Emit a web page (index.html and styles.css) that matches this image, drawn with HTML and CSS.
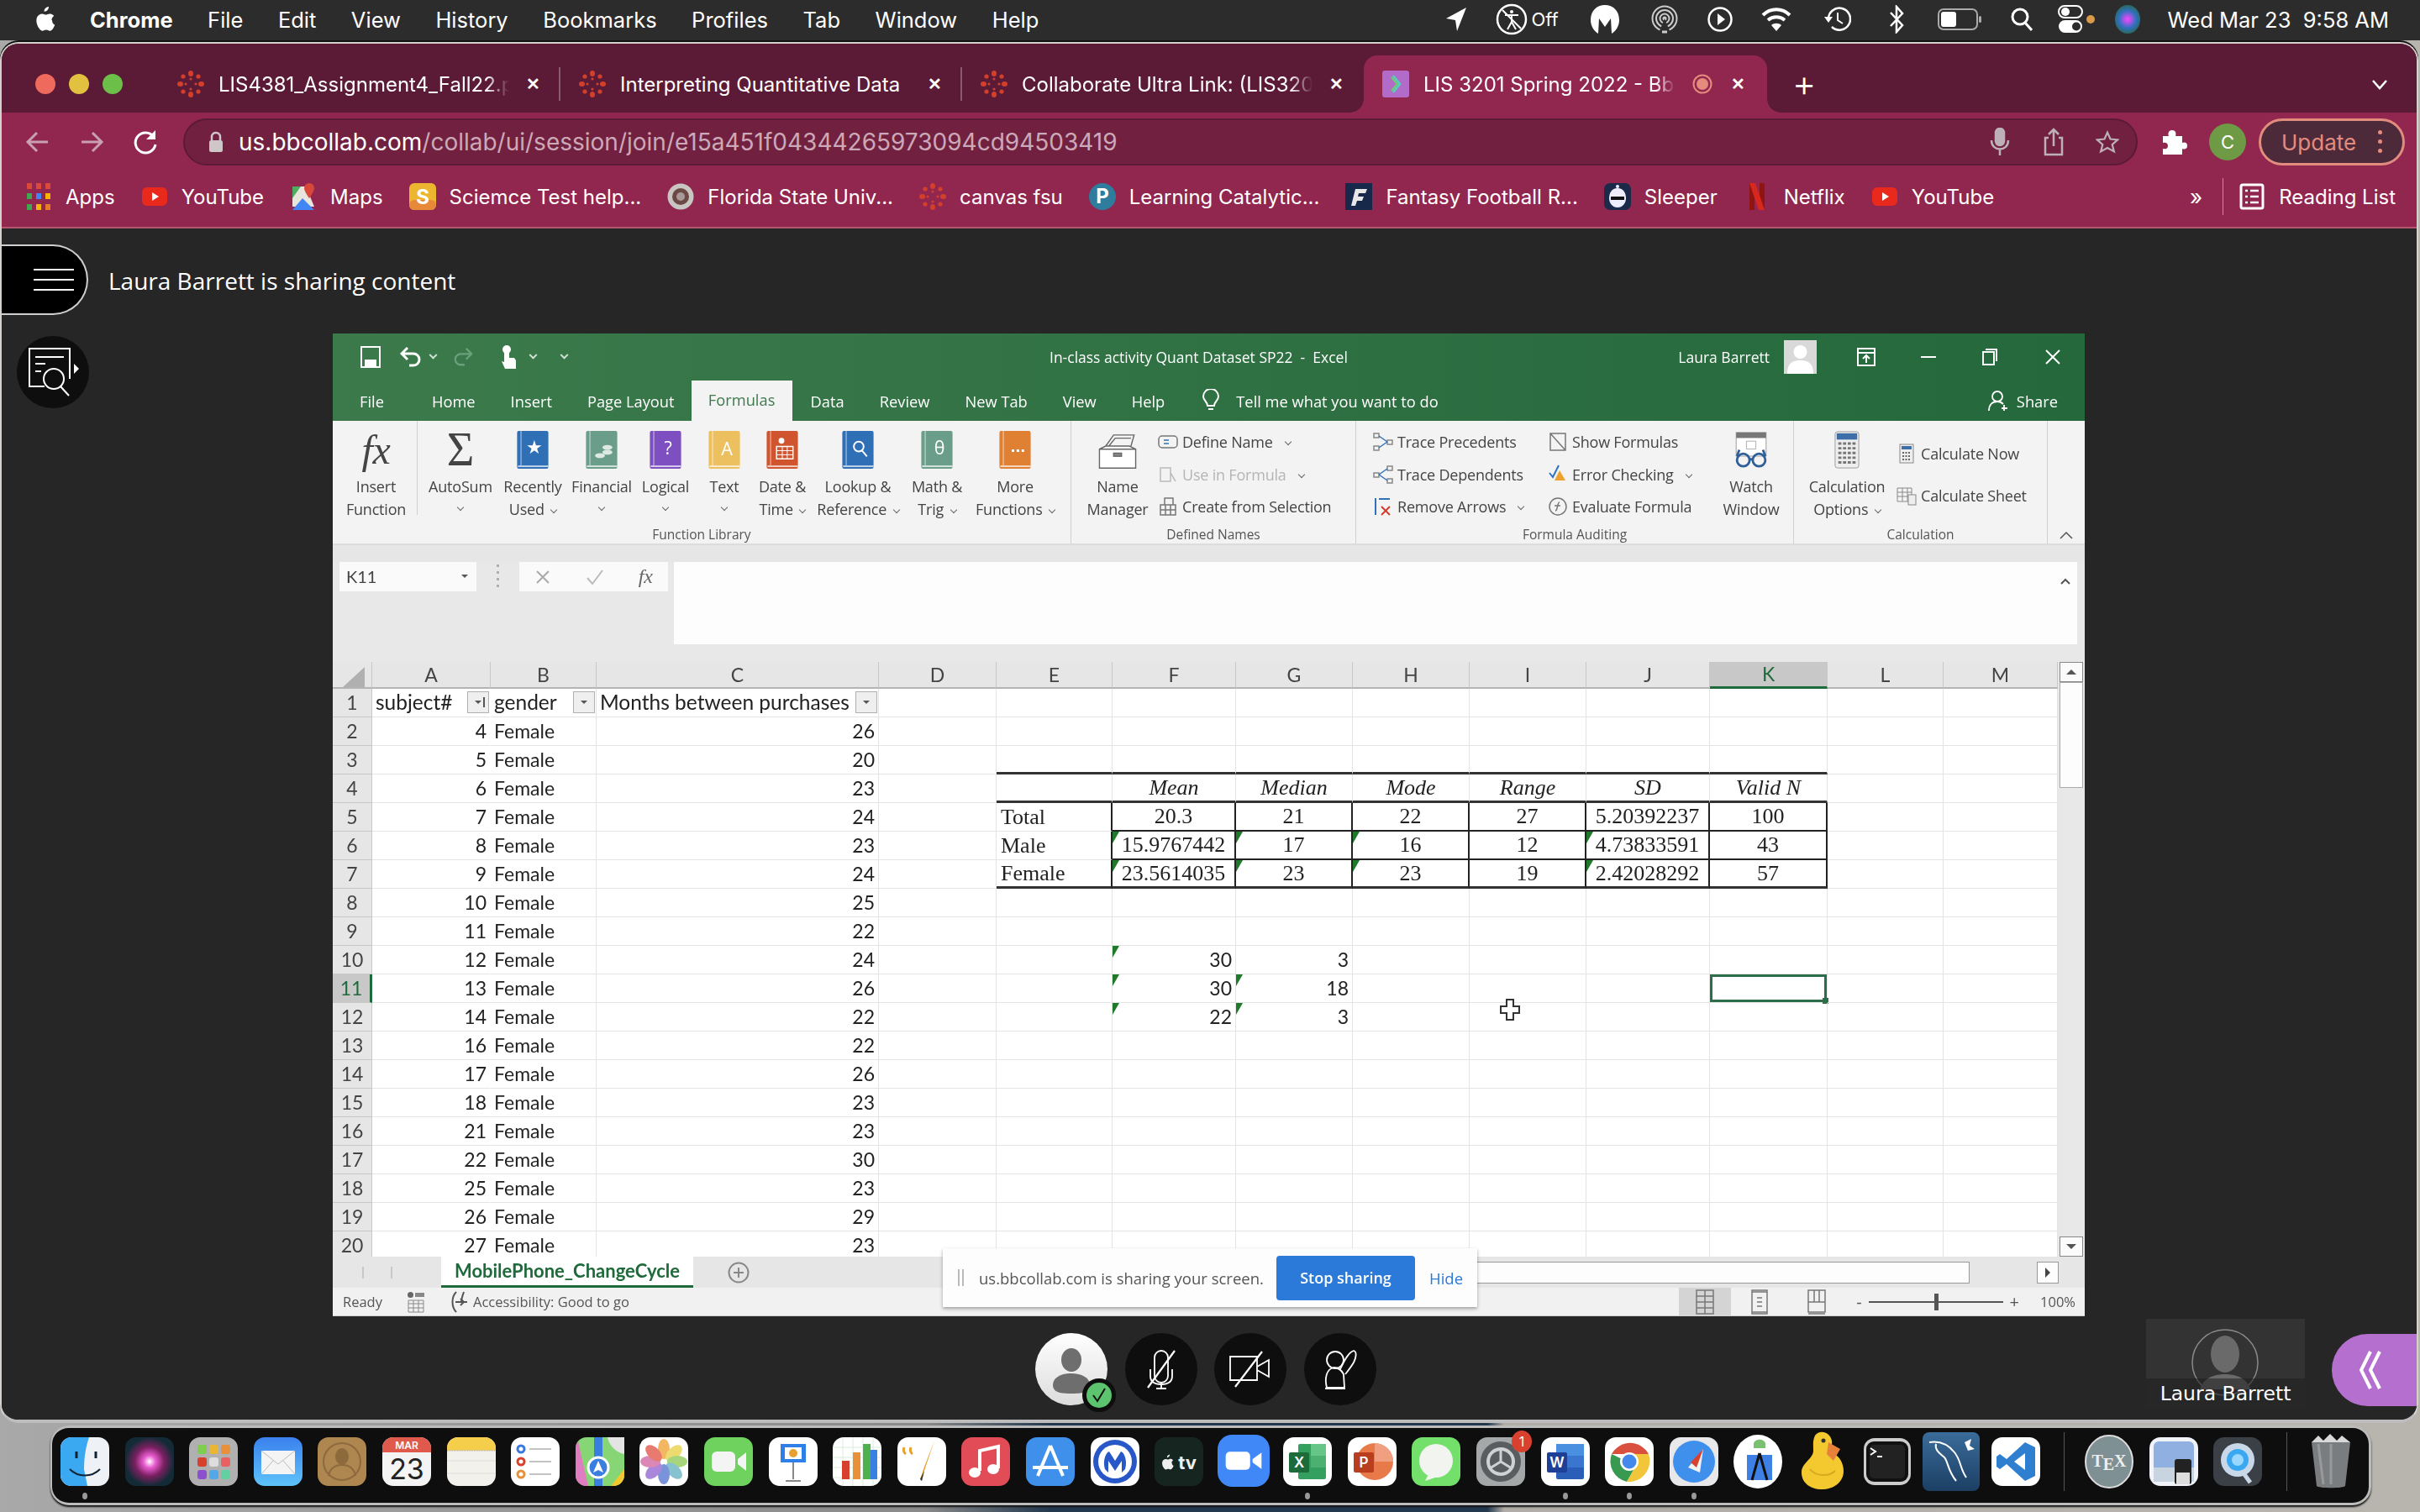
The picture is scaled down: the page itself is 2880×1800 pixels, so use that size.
FILE: index.html
```html
<!DOCTYPE html>
<html lang="en">
<head>
  <meta charset="UTF-8" />
  <title>LIS 3201 Spring 2022 - Bb Collaborate</title>
  <link rel="stylesheet" href="styles.css">
</head>
<body>
  <svg class="defs" width="0" height="0">
    <defs>
      <g id="canvas">
        <g fill="#d2402b">
          <ellipse cx="16" cy="3.5" rx="3" ry="3.5"/><ellipse cx="16" cy="28.5" rx="3" ry="3.5"/>
          <ellipse cx="3.5" cy="16" rx="3.5" ry="3"/><ellipse cx="28.5" cy="16" rx="3.5" ry="3"/>
          <circle cx="7" cy="7" r="2.6"/><circle cx="25" cy="7" r="2.6"/><circle cx="7" cy="25" r="2.6"/><circle cx="25" cy="25" r="2.6"/>
          <circle cx="16" cy="10" r="1.6"/><circle cx="16" cy="22" r="1.6"/><circle cx="10" cy="16" r="1.6"/><circle cx="22" cy="16" r="1.6"/>
        </g>
      </g>
      <g id="yt">
        <rect x="1" y="5" width="30" height="22" rx="6" fill="#e8291c"/>
        <path d="M13 11l8 5-8 5z" fill="#fff"/>
      </g>
      <g id="book">
        <rect width="38" height="46" rx="2" fill="currentColor"/>
        <rect x="4" width="1.5" height="42" fill="#fff" opacity=".45"/>
        <rect x="1" y="42" width="37" height="2" fill="#fff" opacity=".7"/>
      </g>
      <path id="apl" d="M18 1c.3 3-2.600 6-5.400 5.700C12.300 3.800 15 1.300 18 1zM21.500 17c0-3.300 2.700-4.900 2.800-5-1.500-2.300-3.900-2.600-4.800-2.600-2-.2-4 1.200-5 1.200s-2.700-1.200-4.400-1.100C7.800 9.500 5.700 10.800 4.500 12.800c-2.400 4.100-.6 10.200 1.700 13.500 1.100 1.600 2.500 3.500 4.300 3.400 1.700-.1 2.400-1.100 4.400-1.100s2.700 1.100 4.400 1.100c1.900 0 3-1.600 4.100-3.300 1.300-1.900 1.800-3.700 1.900-3.800-.1 0-3.300-1.300-3.300-5.600z"/>
    </defs>
  </svg>

  <header class="menubar">
    <svg class="apple" viewBox="0 0 26 32" fill="#fff"><use href="#apl"/></svg>
    <nav class="menu">
      <span class="app">Chrome</span><span>File</span><span>Edit</span><span>View</span><span>History</span><span>Bookmarks</span><span>Profiles</span><span>Tab</span><span>Window</span><span>Help</span>
    </nav>
    <div class="status">
      <svg width="26" height="32" viewBox="0 0 26 32"><path d="M25 2L1 15l11 2 2 13z" fill="#fff"/></svg>
      <div class="off">
        <svg width="38" height="38" viewBox="0 0 38 38" fill="none" stroke="#fff" stroke-width="2.500"><circle cx="19" cy="19" r="17"/><circle cx="19" cy="10" r="2" fill="#fff" stroke="none"/><path d="M11 14h16M19 14v8l-5 9M19 22l5 9M8 8l22 22" stroke-width="2"/></svg>
        <span>Off</span>
      </div>
      <svg width="38" height="36" viewBox="0 0 38 36"><path d="M19 1C9 1 2 8 2 19c0 7 4 13 9 16l1-18 7 10 7-10 1 18c5-3 9-9 9-16C36 8 29 1 19 1z" fill="#fff"/></svg>
      <svg width="32" height="34" viewBox="0 0 32 34" fill="none" stroke="#ccc" stroke-width="2"><circle cx="16" cy="16" r="14.500"/><circle cx="16" cy="16" r="10"/><circle cx="16" cy="16" r="5.500"/><circle cx="16" cy="16" r="1.500" fill="#ccc"/><path d="M16 16l-7 17h14z" fill="#2c2c2c" stroke="none"/><path d="M13 32h6" stroke-width="3"/></svg>
      <svg width="30" height="30" viewBox="0 0 30 30" fill="none"><circle cx="15" cy="15" r="13.500" stroke="#fff" stroke-width="2.500"/><path d="M12 8l9 7-9 7z" fill="#fff"/></svg>
      <svg width="38" height="30" viewBox="0 0 38 30" fill="none" stroke="#fff" stroke-width="4"><path d="M3 10c9-9 23-9 32 0M9 16c6-5 14-5 20 0"/><path d="M19 29l-6-7c3-3 9-3 12 0z" fill="#fff" stroke="none"/></svg>
      <svg width="32" height="32" viewBox="0 0 32 32" fill="none" stroke="#fff" stroke-width="2.500"><path d="M5 16a13 13 0 1 1 4 9"/><path d="M16 8v9l6 4" stroke-width="2"/><path d="M0 13h10l-5 7z" fill="#fff" stroke="none"/></svg>
      <svg width="18" height="34" viewBox="0 0 18 34" fill="none" stroke="#fff" stroke-width="2.500"><path d="M2 9l14 15-7 8V2l7 8-14 15"/></svg>
      <svg width="52" height="26" viewBox="0 0 52 26"><rect x="1" y="1" width="46" height="24" rx="6" fill="none" stroke="#aaa" stroke-width="2"/><rect x="4" y="4" width="18" height="18" rx="3" fill="#fff"/><rect x="49" y="9" width="3" height="8" rx="1.500" fill="#aaa"/></svg>
      <svg width="26" height="28" viewBox="0 0 26 28" fill="none" stroke="#fff" stroke-width="3"><circle cx="11" cy="11" r="9"/><path d="M17 18l8 9"/></svg>
      <div class="ctl">
        <svg width="30" height="34" viewBox="0 0 30 34"><rect x="1" y="1" width="28" height="14" rx="7" fill="none" stroke="#fff" stroke-width="2"/><circle cx="9" cy="8" r="5" fill="#fff"/><rect x="1" y="18" width="28" height="15" rx="7.500" fill="#fff"/><circle cx="22" cy="25.500" r="5" fill="#2c2c2c"/></svg>
        <i></i>
      </div>
      <div class="siri"></div>
    </div>
    <time class="clock">Wed Mar 23&nbsp; 9:58 AM</time>
  </header>

  <main class="window">
    <div class="tabstrip">
      <div class="lights"><i class="red"></i><i class="yellow"></i><i class="green"></i></div>
      <div class="tab">
        <svg class="fav" viewBox="0 0 32 32"><use href="#canvas"/></svg>
        <span class="tab-title fade">LIS4381_Assignment4_Fall22.p</span>
        <span class="tab-x">&#10005;</span>
      </div>
      <div class="tab">
        <svg class="fav" viewBox="0 0 32 32"><use href="#canvas"/></svg>
        <span class="tab-title">Interpreting Quantitative Data</span>
        <span class="tab-x">&#10005;</span>
      </div>
      <div class="tab no-sep">
        <svg class="fav" viewBox="0 0 32 32"><use href="#canvas"/></svg>
        <span class="tab-title fade">Collaborate Ultra Link: (LIS320</span>
        <span class="tab-x">&#10005;</span>
      </div>
      <div class="tab active">
        <svg class="fav" viewBox="0 0 32 32"><rect width="32" height="32" rx="3" fill="#b26bc8"/><path d="M13 6l8 10-8 10" fill="none" stroke="#52d0c0" stroke-width="2.500"/><path d="M11 8l7 8-7 8" fill="none" stroke="#66d66a" stroke-width="2"/></svg>
        <span class="tab-title rec fade">LIS 3201 Spring 2022 - Bb</span>
        <svg class="rec-dot" viewBox="0 0 24 24"><circle cx="12" cy="12" r="10.500" fill="none" stroke="#e48b7e" stroke-width="2"/><circle cx="12" cy="12" r="7" fill="#e48b7e"/></svg>
        <span class="tab-x">&#10005;</span>
      </div>
      <span class="newtab">+</span>
      <svg class="tab-menu" width="20" height="14" viewBox="0 0 20 14" fill="none" stroke="#fff" stroke-width="2.500"><path d="M2 2l8 9 8-9"/></svg>
    </div>

    <div class="toolbar">
      <svg class="tb-ic" viewBox="0 0 32 32" fill="none" stroke="#c9a0b2" stroke-width="3"><path d="M28 16H5M15 5L4 16l11 11"/></svg>
      <svg class="tb-ic" viewBox="0 0 32 32" fill="none" stroke="#c9a0b2" stroke-width="3"><path d="M4 16h23M17 5l11 11-11 11"/></svg>
      <svg class="tb-ic" viewBox="0 0 32 32" fill="none" stroke="#fff" stroke-width="3"><path d="M26 10a12 12 0 1 0 2 9"/><path d="M28 2v11H17z" fill="#fff" stroke="none"/></svg>
      <div class="omnibox">
        <svg class="lock" viewBox="0 0 18 26"><path d="M4 11V7a5 5 0 0 1 10 0v4" fill="none" stroke="#cfc6ca" stroke-width="2.500"/><rect x="1" y="11" width="16" height="14" rx="2.500" fill="#cfc6ca"/></svg>
        <span class="url"><b>us.bbcollab.com</b>/collab/ui/session/join/e15a451f04344265973094cd94503419</span>
        <svg class="omni-ic" viewBox="0 0 26 34" fill="none" stroke="#bdb0b6" stroke-width="2.500"><rect x="8" y="1" width="10" height="20" rx="5" fill="#bdb0b6"/><path d="M3 15c0 14 20 14 20 0M13 26v7"/></svg>
        <svg class="omni-ic" viewBox="0 0 26 34" fill="none" stroke="#bdb0b6" stroke-width="2.500"><path d="M7 12H3v20h20V12h-4M13 22V2M7 8l6-6 6 6"/></svg>
        <svg class="omni-ic" viewBox="0 0 32 32" fill="none" stroke="#bdb0b6" stroke-width="2.500"><path d="M16 3l4 9 10 1-7.500 6.500L25 29l-9-5-9 5 2.500-9.500L2 13l10-1z"/></svg>
      </div>
      <svg class="puzzle" viewBox="0 0 32 32"><path d="M3 9h7c-1-2-1-7 4-7s5 5 4 7h8v8c2-1 6-1 6 3.500S28 25 26 24v7H3v-7c3 1 6 0 6-3.500S6 16 3 17z" fill="#fff"/></svg>
      <div class="profile">C</div>
      <div class="update">Update<i></i></div>
    </div>

    <div class="bookmarks">
      <div class="bm">
        <svg class="bm-ic" viewBox="0 0 32 32"><g fill="#d94a3a"><rect x="2" width="6" height="7"/><rect x="13" width="6" height="7"/><rect x="24" width="6" height="7"/></g><rect x="2" y="12" width="6" height="7" fill="#3fa750"/><rect x="13" y="12" width="6" height="7" fill="#4285f4"/><rect x="24" y="12" width="6" height="7" fill="#f4b400"/><rect x="2" y="25" width="6" height="7" fill="#3fa750"/><rect x="13" y="25" width="6" height="7" fill="#f4b400"/><rect x="24" y="25" width="6" height="7" fill="#e8792b"/></svg>
        Apps
      </div>
      <div class="bm"><svg class="bm-ic" viewBox="0 0 32 32"><use href="#yt"/></svg>YouTube</div>
      <div class="bm">
        <svg class="bm-ic" viewBox="0 0 32 32"><path d="M3 4h16l10 24H3z" fill="#e8e6dc"/><path d="M3 4h10L3 18z" fill="#4fae5d"/><path d="M3 32l12-14 14 14z" fill="#4285f4"/><path d="M23 0a6 6 0 0 1 6 6c0 4-6 12-6 12s-6-8-6-12a6 6 0 0 1 6-6z" fill="#d8483a"/></svg>
        Maps
      </div>
      <div class="bm">
        <svg class="bm-ic" viewBox="0 0 32 32"><rect width="32" height="32" rx="6" fill="#ecb62f"/><rect y="20" width="32" height="12" rx="6" fill="#e8893a"/><text x="16" y="25" class="fav-txt">S</text></svg>
        Sciemce Test help...
      </div>
      <div class="bm">
        <svg class="bm-ic" viewBox="0 0 32 32"><circle cx="16" cy="16" r="15.500" fill="#c9c5c2"/><circle cx="16" cy="16" r="10" fill="#6b4a45"/><circle cx="16" cy="16" r="5" fill="#a99"/></svg>
        Florida State Univ...
      </div>
      <div class="bm"><svg class="bm-ic" viewBox="0 0 32 32"><use href="#canvas"/></svg>canvas fsu</div>
      <div class="bm">
        <svg class="bm-ic" viewBox="0 0 32 32"><circle cx="16" cy="16" r="16" fill="#2f7d9e"/><text x="16" y="24" class="fav-txt">P</text></svg>
        Learning Catalytic...
      </div>
      <div class="bm">
        <svg class="bm-ic" viewBox="0 0 32 32"><rect width="32" height="32" fill="#17294a"/><path d="M12 7h14l-2 5h-8l-1 4h7l-2 5h-6l-2 6H7z" fill="#e8e8e8"/></svg>
        Fantasy Football R...
      </div>
      <div class="bm">
        <svg class="bm-ic" viewBox="0 0 32 32"><rect width="32" height="32" rx="7" fill="#1c2a49"/><path d="M16 6c7 0 10 6 10 12s-4 11-10 11-10-5-10-11S9 6 16 6z" fill="#eef"/><path d="M8 16h16v4H8z" fill="#111"/><circle cx="16" cy="4" r="2" fill="#eef"/></svg>
        Sleeper
      </div>
      <div class="bm">
        <svg class="bm-ic" viewBox="0 0 32 32"><path d="M7 0h6v32H7zM19 0h6v32h-6z" fill="#8f1513"/><path d="M7 0h7l11 32h-7z" fill="#d7281f"/></svg>
        Netflix
      </div>
      <div class="bm"><svg class="bm-ic" viewBox="0 0 32 32"><use href="#yt"/></svg>YouTube</div>
      <div class="bm-more">
        <span class="chev">&raquo;</span>
        <i class="bm-sep"></i>
        <svg class="bm-ic" viewBox="0 0 32 32" fill="none" stroke="#fff" stroke-width="3"><rect x="3" y="2" width="26" height="28" rx="2"/><path d="M8 9h3M14 9h10M8 16h3M14 16h10M8 23h3M14 23h10" stroke-width="2.500"/></svg>
        Reading List
      </div>
    </div>

    <section class="collab">
      <div class="session-head">
        <div class="hamburger"><i></i><i></i><i></i></div>
        <span>Laura Barrett is sharing content</span>
      </div>

      <div class="stage">
        <div class="side">
          <div class="round">
            <svg width="64" height="62" viewBox="0 0 64 62" fill="none" stroke="#fff" stroke-width="2"><path d="M19 47H1V2h48v36"/><path d="M8 12h34M8 20h12M8 29h7"/><circle cx="30" cy="38" r="12"/><path d="M38 47l10 11"/><path d="M54 20l6 6-6 6z" fill="#fff" stroke="none"/></svg>
          </div>
        </div>

        <div class="excel">
          <div class="xl-title">
            <div class="qat">
              <svg width="24" height="26" viewBox="0 0 24 26" fill="none" stroke="#fff" stroke-width="2"><path d="M1 1h22v24H1z"/><path d="M6 17h12v8H6z" fill="#fff"/></svg>
              <svg class="q-undo" width="26" height="26" viewBox="0 0 26 26" fill="none" stroke="#fff" stroke-width="3"><path d="M3 9h13a7 7 0 0 1 0 14h-5M9 2L2 9l7 7"/></svg>
              <i class="tiny"></i>
              <svg class="q-redo" width="24" height="24" viewBox="0 0 26 26" fill="none" stroke="#6aa07a" stroke-width="2.500"><path d="M23 9H10a7 7 0 0 0 0 14h5M17 2l7 7-7 7"/></svg>
              <svg class="q-touch" width="22" height="30" viewBox="0 0 22 30"><circle cx="9" cy="6" r="5" fill="#fff"/><path d="M6 8h6v8h6l2 3v10H7l-4-9 3 1z" fill="#fff"/></svg>
              <i class="tiny q-drop"></i>
              <i class="tiny dash"></i>
            </div>
            <div class="xl-doc">In-class activity Quant Dataset SP22&nbsp; -&nbsp; Excel</div>
            <div class="xl-user">
              <span>Laura Barrett</span>
              <svg class="u-pic" width="39" height="40" viewBox="0 0 39 40"><rect width="39" height="40" fill="#d9d9d9"/><circle cx="19.500" cy="14" r="8" fill="#fff"/><path d="M4 40c0-14 8-16 15.500-16S35 26 35 40z" fill="#fff"/></svg>
              <svg class="win-ic w-disp" width="22" height="22" viewBox="0 0 22 22" fill="none" stroke="#fff" stroke-width="2"><rect x="1" y="1" width="20" height="20"/><path d="M1 6h20M11 18v-8M7 13l4-4 4 4"/></svg>
              <svg class="win-ic" width="18" height="4" viewBox="0 0 18 4"><rect y="1" width="18" height="2" fill="#fff"/></svg>
              <svg class="win-ic w-rest" width="18" height="20" viewBox="0 0 18 20" fill="none" stroke="#fff" stroke-width="2"><rect x="1" y="4" width="13" height="15"/><path d="M4 1h13v14"/></svg>
              <svg class="win-ic w-close" width="20" height="20" viewBox="0 0 20 20" fill="none" stroke="#fff" stroke-width="2"><path d="M2 2l16 16M18 2L2 18"/></svg>
            </div>
          </div>

          <div class="xl-tabs">
            <span class="t-file">File</span><span>Home</span><span>Insert</span><span>Page Layout</span><span class="on">Formulas</span><span>Data</span><span>Review</span><span>New Tab</span><span>View</span><span>Help</span>
            <svg class="bulb" width="22" height="28" viewBox="0 0 22 28" fill="none" stroke="#fff" stroke-width="2"><path d="M7 20c0-5-5-6-5-11a9 9 0 0 1 18 0c0 5-5 6-5 11zM8 24h6"/></svg>
            <span class="tell">Tell me what you want to do</span>
            <span class="share">
              <svg width="24" height="26" viewBox="0 0 24 26" fill="none" stroke="#fff" stroke-width="1.800"><circle cx="11" cy="8" r="6"/><path d="M1 25c0-7 4-11 10-11 3 0 5 1 7 3M19 18v7M16 22h7"/></svg>
              Share
            </span>
          </div>

          <div class="ribbon">
            <div class="group lib">
              <div class="group-body">
                <div class="big b-insert">
                  <span class="fx-big">fx</span>
                  <span>Insert<br>Function</span>
                </div>
                <div class="big">
                  <span class="sigma">&Sigma;</span>
                  <span>AutoSum<br><i class="dd only"></i></span>
                </div>
                <div class="big">
                  <svg class="book blue" viewBox="0 0 38 46"><use href="#book"/><text x="21" y="28" class="bk-txt">&#9733;</text></svg>
                  <span>Recently<br>Used <i class="dd"></i></span>
                </div>
                <div class="big">
                  <svg class="book sage" viewBox="0 0 38 46"><use href="#book"/><ellipse cx="26" cy="20" rx="6" ry="3" fill="#dfe9e4"/><ellipse cx="26" cy="26" rx="6" ry="3" fill="#dfe9e4"/><ellipse cx="17" cy="30" rx="6" ry="3" fill="#dfe9e4"/></svg>
                  <span>Financial<br><i class="dd only"></i></span>
                </div>
                <div class="big">
                  <svg class="book purple" viewBox="0 0 38 46"><use href="#book"/><text x="22" y="29" class="bk-txt">?</text></svg>
                  <span>Logical<br><i class="dd only"></i></span>
                </div>
                <div class="big">
                  <svg class="book gold" viewBox="0 0 38 46"><use href="#book"/><text x="22" y="30" class="bk-txt">A</text></svg>
                  <span>Text<br><i class="dd only"></i></span>
                </div>
                <div class="big">
                  <svg class="book rust" viewBox="0 0 38 46"><use href="#book"/><circle cx="18" cy="12" r="3.500" fill="#fff"/><path d="M12 19h20v15H12z" fill="none" stroke="#fff" stroke-width="1.500"/><path d="M12 24h20M12 29h20M19 19v15M25 19v15" stroke="#fff"/></svg>
                  <span>Date &amp;<br>Time <i class="dd"></i></span>
                </div>
                <div class="big">
                  <svg class="book blue" viewBox="0 0 38 46"><use href="#book"/><circle cx="20" cy="19" r="6" fill="none" stroke="#fff" stroke-width="2"/><path d="M24 24l6 7" stroke="#fff" stroke-width="2"/></svg>
                  <span>Lookup &amp;<br>Reference <i class="dd"></i></span>
                </div>
                <div class="big">
                  <svg class="book sage" viewBox="0 0 38 46"><use href="#book"/><text x="22" y="29" class="bk-txt">&theta;</text></svg>
                  <span>Math &amp;<br>Trig <i class="dd"></i></span>
                </div>
                <div class="big">
                  <svg class="book orange" viewBox="0 0 38 46"><use href="#book"/><path d="M15 24h3M21 24h3M27 24h3" stroke="#fff" stroke-width="3"/></svg>
                  <span>More<br>Functions <i class="dd"></i></span>
                </div>
              </div>
              <div class="group-label">Function Library</div>
            </div>

            <div class="group names">
              <div class="group-body">
                <div class="big name-mgr">
                  <svg width="50" height="48" viewBox="0 0 50 48" fill="none" stroke="#666" stroke-width="1.500"><path d="M10 16L20 2h26l-4 14" fill="#f4f4f4"/><path d="M14 16l8-10h20" /><path d="M2 20l8-4h30l8 4v24H2z" fill="#fff"/><path d="M2 20h46" /><rect x="20" y="25" width="10" height="4" fill="#888"/></svg>
                  <span>Name<br>Manager</span>
                </div>
                <div class="list">
                  <div class="item">
                    <svg class="sm" viewBox="0 0 24 24" fill="none" stroke="#777" stroke-width="1.500"><rect x="1" y="5" width="22" height="14" rx="4"/><path d="M7 10h6M7 14h6" stroke="#2f72b9"/></svg>
                    Define Name <i class="dd"></i>
                  </div>
                  <div class="item off">
                    <svg class="sm" viewBox="0 0 24 24" fill="none" stroke="#bbb" stroke-width="1.500"><path d="M3 4h12v16H3zM15 10l6 10"/></svg>
                    Use in Formula <i class="dd"></i>
                  </div>
                  <div class="item">
                    <svg class="sm" viewBox="0 0 24 24" fill="none" stroke="#777" stroke-width="1.500"><path d="M3 10h18v12H3zM3 16h18M9 10v12M15 10v12M8 2h10v8H8z"/></svg>
                    Create from Selection
                  </div>
                </div>
              </div>
              <div class="group-label">Defined Names</div>
            </div>

            <div class="group audit">
              <div class="group-body">
                <div class="list">
                  <div class="item">
                    <svg class="sm" viewBox="0 0 24 24" fill="none" stroke="#2f72b9" stroke-width="1.500"><rect x="1" y="2" width="6" height="5" stroke="#888"/><rect x="1" y="17" width="6" height="5" stroke="#888"/><rect x="17" y="10" width="6" height="5" stroke="#888"/><path d="M7 5l10 7M7 19l10-7"/></svg>
                    Trace Precedents
                  </div>
                  <div class="item">
                    <svg class="sm" viewBox="0 0 24 24" fill="none" stroke="#2f72b9" stroke-width="1.500"><rect x="17" y="2" width="6" height="5" stroke="#888"/><rect x="17" y="17" width="6" height="5" stroke="#888"/><rect x="1" y="10" width="6" height="5" stroke="#888"/><path d="M7 12l10-7M7 12l10 7"/></svg>
                    Trace Dependents
                  </div>
                  <div class="item">
                    <svg class="sm" viewBox="0 0 24 24" fill="none" stroke-width="2"><path d="M3 2v20M7 3h13" stroke="#2f72b9"/><path d="M10 12l10 10M20 12L10 22" stroke="#d23b2b"/></svg>
                    Remove Arrows <i class="dd"></i>
                  </div>
                </div>
                <div class="list">
                  <div class="item">
                    <svg class="sm" viewBox="0 0 24 24" fill="none" stroke="#777" stroke-width="1.500"><path d="M3 2h18v20H3zM3 2l18 20"/></svg>
                    Show Formulas
                  </div>
                  <div class="item">
                    <svg class="sm" viewBox="0 0 24 24"><path d="M2 10l4 5 7-14" fill="none" stroke="#2f72b9" stroke-width="2"/><path d="M14 7l7 12H8z" fill="#f0a030"/></svg>
                    Error Checking <i class="dd"></i>
                  </div>
                  <div class="item">
                    <svg class="sm" viewBox="0 0 24 24" fill="none" stroke="#777" stroke-width="1.500"><circle cx="12" cy="12" r="10"/><path d="M9 17c3 0 2-10 5-10M8 11h7"/></svg>
                    Evaluate Formula
                  </div>
                </div>
                <div class="big watch">
                  <svg width="42" height="48" viewBox="0 0 42 48"><rect x="2" y="2" width="38" height="30" fill="#fff" stroke="#999"/><rect x="2" y="2" width="38" height="7" fill="#777"/><path d="M15 13h12v10H15z" fill="none" stroke="#aaa"/><g fill="none" stroke="#2f5f99" stroke-width="3"><circle cx="11" cy="37" r="8"/><circle cx="31" cy="37" r="8"/><path d="M19 36h4M3 32l3-8M39 32l-3-8"/></g></svg>
                  <span>Watch<br>Window</span>
                </div>
              </div>
              <div class="group-label">Formula Auditing</div>
            </div>

            <div class="group calc">
              <div class="group-body">
                <div class="big calc-opt">
                  <svg width="32" height="48" viewBox="0 0 32 48"><rect x="1" y="1" width="30" height="46" rx="3" fill="#eee" stroke="#999"/><rect x="3" y="3" width="26" height="8" fill="#3d6ea8"/><path d="M5 16h22M5 22h22M5 28h22M5 34h22M5 40h22" stroke="#777" stroke-width="3" stroke-dasharray="4 2"/></svg>
                  <span>Calculation<br>Options <i class="dd"></i></span>
                </div>
                <div class="list calc-list">
                  <div class="item">
                    <svg class="sm" viewBox="0 0 24 24"><rect x="4" y="1" width="16" height="22" fill="#eee" stroke="#888"/><rect x="6" y="3" width="12" height="4" fill="#3d6ea8"/><path d="M7 11h10M7 15h10M7 19h10" stroke="#666" stroke-width="2" stroke-dasharray="2 1.500"/></svg>
                    Calculate Now
                  </div>
                  <div class="item">
                    <svg class="sm" viewBox="0 0 24 24" fill="none" stroke="#888"><path d="M1 3h17v16H1zM1 8h17M1 13h17M7 3v16M13 3v16"/><rect x="14" y="11" width="9" height="12" fill="#eee"/></svg>
                    Calculate Sheet
                  </div>
                </div>
              </div>
              <div class="group-label">Calculation</div>
            </div>
            <svg class="collapse" width="16" height="10" viewBox="0 0 16 10" fill="none" stroke="#555" stroke-width="1.500"><path d="M1 9l7-7 7 7"/></svg>
          </div>

          <div class="band"></div>

          <div class="formula">
            <div class="name-box">K11<i class="mini-down"></i></div>
            <div class="grip"></div>
            <div class="fx-box">
              <svg width="20" height="20" viewBox="0 0 20 20" fill="none" stroke="#aaa" stroke-width="2"><path d="M3 3l14 14M17 3L3 17"/></svg>
              <svg width="22" height="20" viewBox="0 0 22 20" fill="none" stroke="#bbb" stroke-width="2"><path d="M2 11l6 7L20 2"/></svg>
              <em>fx</em>
            </div>
            <div class="input">
              <svg width="12" height="8" viewBox="0 0 12 8" fill="none" stroke="#555" stroke-width="2"><path d="M1 7l5-5 5 5"/></svg>
            </div>
          </div>
          <div class="band thin"></div>

          <div class="sheet">
            <table class="grid">
              <colgroup>
                <col class="c-h"><col class="c-a"><col class="c-b"><col class="c-c"><col class="c-d"><col class="c-e"><col class="c-f"><col class="c-g"><col class="c-g"><col class="c-g"><col class="c-f"><col class="c-d"><col class="c-e"><col class="c-m">
              </colgroup>
              <thead>
                <tr><th class="corner"><i></i></th><th>A</th><th>B</th><th>C</th><th>D</th><th>E</th><th>F</th><th>G</th><th>H</th><th>I</th><th>J</th><th class="sel">K</th><th>L</th><th>M</th></tr>
              </thead>
              <tbody>
                <tr><th>1</th><td class="fl">subject#<i class="filter sorted"></i></td><td class="fl">gender<i class="filter"></i></td><td class="fl">Months between purchases<i class="filter"></i></td><td></td><td></td><td></td><td></td><td></td><td></td><td></td><td></td><td></td><td></td></tr>
                <tr><th>2</th><td class="n">4</td><td>Female</td><td class="n">26</td><td></td><td></td><td></td><td></td><td></td><td></td><td></td><td></td><td></td><td></td></tr>
                <tr class="above-stats"><th>3</th><td class="n">5</td><td>Female</td><td class="n">20</td><td></td><td class="x"></td><td class="x"></td><td class="x"></td><td class="x"></td><td class="x"></td><td class="x"></td><td class="x"></td><td></td><td></td></tr>
                <tr><th>4</th><td class="n">6</td><td>Female</td><td class="n">23</td><td></td><td class="x"></td><td class="x h">Mean</td><td class="x h">Median</td><td class="x h">Mode</td><td class="x h">Range</td><td class="x h">SD</td><td class="x h">Valid N</td><td></td><td></td></tr>
                <tr><th>5</th><td class="n">7</td><td>Female</td><td class="n">24</td><td></td><td class="lab">Total</td><td class="s">20.3</td><td class="s">21</td><td class="s">22</td><td class="s">27</td><td class="s">5.20392237</td><td class="s">100</td><td></td><td></td></tr>
                <tr><th>6</th><td class="n">8</td><td>Female</td><td class="n">23</td><td></td><td class="lab">Male</td><td class="s flag">15.9767442</td><td class="s flag">17</td><td class="s flag">16</td><td class="s">12</td><td class="s flag">4.73833591</td><td class="s">43</td><td></td><td></td></tr>
                <tr><th>7</th><td class="n">9</td><td>Female</td><td class="n">24</td><td></td><td class="lab x">Female</td><td class="s x flag">23.5614035</td><td class="s x flag">23</td><td class="s x flag">23</td><td class="s x">19</td><td class="s x flag">2.42028292</td><td class="s x">57</td><td></td><td></td></tr>
                <tr><th>8</th><td class="n">10</td><td>Female</td><td class="n">25</td><td></td><td></td><td></td><td></td><td></td><td></td><td></td><td></td><td></td><td></td></tr>
                <tr><th>9</th><td class="n">11</td><td>Female</td><td class="n">22</td><td></td><td></td><td></td><td></td><td></td><td></td><td></td><td></td><td></td><td></td></tr>
                <tr><th>10</th><td class="n">12</td><td>Female</td><td class="n">24</td><td></td><td></td><td class="n flag">30</td><td class="n">3</td><td></td><td></td><td></td><td></td><td></td><td></td></tr>
                <tr><th class="sel">11</th><td class="n">13</td><td>Female</td><td class="n">26</td><td></td><td></td><td class="n flag">30</td><td class="n flag">18</td><td></td><td></td><td></td><td class="active"><i class="cursor-box"></i></td><td></td><td></td></tr>
                <tr><th>12</th><td class="n">14</td><td>Female</td><td class="n">22</td><td></td><td></td><td class="n flag">22</td><td class="n flag">3</td><td></td><td class="has-cur"><svg class="plus-cur" width="26" height="28" viewBox="0 0 26 28"><path d="M9 2h8v8h7v8h-7v8H9v-8H2v-8h7z" fill="#fff" stroke="#333" stroke-width="2"/></svg></td><td></td><td></td><td></td><td></td></tr>
                <tr><th>13</th><td class="n">16</td><td>Female</td><td class="n">22</td><td></td><td></td><td></td><td></td><td></td><td></td><td></td><td></td><td></td><td></td></tr>
                <tr><th>14</th><td class="n">17</td><td>Female</td><td class="n">26</td><td></td><td></td><td></td><td></td><td></td><td></td><td></td><td></td><td></td><td></td></tr>
                <tr><th>15</th><td class="n">18</td><td>Female</td><td class="n">23</td><td></td><td></td><td></td><td></td><td></td><td></td><td></td><td></td><td></td><td></td></tr>
                <tr><th>16</th><td class="n">21</td><td>Female</td><td class="n">23</td><td></td><td></td><td></td><td></td><td></td><td></td><td></td><td></td><td></td><td></td></tr>
                <tr><th>17</th><td class="n">22</td><td>Female</td><td class="n">30</td><td></td><td></td><td></td><td></td><td></td><td></td><td></td><td></td><td></td><td></td></tr>
                <tr><th>18</th><td class="n">25</td><td>Female</td><td class="n">23</td><td></td><td></td><td></td><td></td><td></td><td></td><td></td><td></td><td></td><td></td></tr>
                <tr><th>19</th><td class="n">26</td><td>Female</td><td class="n">29</td><td></td><td></td><td></td><td></td><td></td><td></td><td></td><td></td><td></td><td></td></tr>
                <tr><th>20</th><td class="n">27</td><td>Female</td><td class="n">23</td><td></td><td></td><td></td><td></td><td></td><td></td><td></td><td></td><td></td><td></td></tr>
              </tbody>
            </table>
            <div class="vscroll">
              <div class="sb-btn"><i class="up"></i></div>
              <div class="sb-thumb"></div>
              <div class="sb-track"></div>
              <div class="sb-btn"><i class="down"></i></div>
            </div>
          </div>

          <div class="sheet-tabs">
            <div class="sheet-nav"><i></i><i></i></div>
            <div class="sheet-tab">MobilePhone_ChangeCycle</div>
            <svg class="add-sheet" width="26" height="26" viewBox="0 0 26 26" fill="none" stroke="#888" stroke-width="2"><circle cx="13" cy="13" r="11.500"/><path d="M13 7v12M7 13h12"/></svg>
            <div class="hscroll"></div>
            <div class="hs-btn"></div>
          </div>

          <div class="xl-status">
            <span>Ready</span>
            <svg class="st-sheet" width="22" height="26" viewBox="0 0 22 26"><rect x="1" y="1" width="7" height="7" rx="3.500" fill="#666"/><rect x="10" y="2" width="11" height="5" fill="#888"/><path d="M2 11h18v14H2zM2 15h18M2 20h18M8 11v14M14 11v14" fill="none" stroke="#888"/></svg>
            <svg class="st-acc" width="22" height="28" viewBox="0 0 22 28" fill="none" stroke="#555" stroke-width="2"><path d="M6 2C0 8 0 20 6 26M15 2c-2 6-3 8-3 12M5 14h14M11 10l4 4-4 4"/></svg>
            <span class="acc">Accessibility: Good to go</span>
            <div class="views">
              <div class="view on"><svg width="22" height="30" viewBox="0 0 22 30" fill="none" stroke="#777" stroke-width="1.500"><path d="M1 1h20v28H1zM1 8h20M1 15h20M1 22h20M11 1v28"/></svg></div>
              <div class="view"><svg width="20" height="30" viewBox="0 0 20 30" fill="none" stroke="#777" stroke-width="1.500"><path d="M1 1h18v28H1zM1 3h18M1 27h18M7 10h6M7 15h6M7 20h6"/></svg></div>
              <div class="view"><svg width="22" height="30" viewBox="0 0 22 30" fill="none" stroke="#777" stroke-width="1.500"><path d="M1 1h20v26H1zM8 1v14M14 1v14M1 15h20M1 29h20"/></svg></div>
            </div>
            <div class="zoomer"><span>-</span><div class="slider"><i></i></div><span>+</span></div>
            <span class="pct">100%</span>
          </div>

          <div class="share-bar">
            <i class="grip-v"></i>
            <span class="share-msg">us.bbcollab.com is sharing your screen.</span>
            <span class="stop">Stop sharing</span>
            <span class="hide">Hide</span>
          </div>
        </div>
      </div>

      <div class="controls">
        <div class="ctrl me">
          <svg width="86" height="86" viewBox="0 0 86 86"><defs><linearGradient id="me" x1="0" y1="0" x2="0" y2="1"><stop offset="0" stop-color="#fff"/><stop offset="1" stop-color="#dcdcdc"/></linearGradient></defs><circle cx="43" cy="43" r="43" fill="url(#me)"/><ellipse cx="43" cy="32" rx="12" ry="14" fill="#6e6e6e"/><path d="M21 62c0-9 10-14 22-14s22 5 22 14-10 10-22 10-22-1-22-10z" fill="#6e6e6e"/></svg>
          <div class="ok"><svg width="24" height="24" viewBox="0 0 24 24" fill="none" stroke="#111" stroke-width="2"><path d="M5 12l5 7 9-15"/></svg></div>
        </div>
        <div class="ctrl">
          <svg width="44" height="48" viewBox="0 0 44 48" fill="none" stroke="#fff" stroke-width="1.800"><path d="M14 32V10a8 8 0 0 1 16 0v22a8 8 0 0 1-16 0z"/><path d="M9 24v8c0 8 6 10 13 10s13-2 13-10v-8M22 42v5M16 47h12" /><path d="M6 46L38 2" stroke-width="2.200"/></svg>
        </div>
        <div class="ctrl">
          <svg width="52" height="46" viewBox="0 0 52 46" fill="none" stroke="#fff" stroke-width="1.800"><path d="M2 8h32v28H2zM34 20l14-8v20l-14-8"/><path d="M8 44L40 2" stroke-width="2.200"/></svg>
        </div>
        <div class="ctrl">
          <svg width="48" height="48" viewBox="0 0 48 48" fill="none" stroke="#fff" stroke-width="1.800"><circle cx="18" cy="13" r="10"/><path d="M8 46c-3-12 0-22 8-24 6 0 10 4 12 8l1 16zM24 24C28 16 33 4 40 2c4 1 3 8 0 14-3 5-6 9-10 14"/><path d="M6 47h24" stroke-width="2.500"/></svg>
        </div>
      </div>

      <div class="tile">
        <svg class="tile-av" width="80" height="120" viewBox="0 0 80 120"><circle cx="40" cy="40" r="39" fill="#333" stroke="#8a8a8a" stroke-width="1.500"/><ellipse cx="40" cy="30" rx="17" ry="22" fill="#6a6a6a"/><path d="M10 72c4-14 18-18 30-18s26 4 30 18z" fill="#6a6a6a"/></svg>
        <div class="tile-name">Laura Barrett</div>
      </div>
      <div class="drawer">
        <svg width="30" height="50" viewBox="0 0 30 50" fill="none" stroke="#fff" stroke-width="4"><path d="M16 3L5 25l11 22M27 3L16 25l11 22"/></svg>
      </div>
    </section>
  </main>

  <footer class="dock">
    <div class="ic">
      <svg viewBox="0 0 58 58"><rect width="58" height="58" rx="13" fill="#eef2f6"/><path d="M13 0h21c-4 12-6 24-6 38l4 20H13A13 13 0 0 1 0 45V13A13 13 0 0 1 13 0z" fill="#3ba9f2"/><path d="M19 17v8M42 17v8" stroke="#123" stroke-width="3"/><path d="M11 38c10 10 26 10 36 0" fill="none" stroke="#123" stroke-width="2"/></svg>
      <i class="run"></i>
    </div>
    <div class="ic"><svg viewBox="0 0 58 58"><defs><radialGradient id="si"><stop offset="0" stop-color="#fff"/><stop offset=".25" stop-color="#e85bd0"/><stop offset=".6" stop-color="#7a2060"/><stop offset="1" stop-color="#122b36"/></radialGradient></defs><rect width="58" height="58" rx="13" fill="url(#si)"/></svg></div>
    <div class="ic"><svg viewBox="0 0 58 58"><rect width="58" height="58" rx="13" fill="#b0b0b0"/><g><rect x="10" y="9" width="11" height="11" rx="3" fill="#7ecf4d"/><rect x="24" y="9" width="11" height="11" rx="3" fill="#e9b634"/><rect x="38" y="9" width="11" height="11" rx="3" fill="#e8903a"/><rect x="10" y="24" width="11" height="11" rx="3" fill="#d8402e"/><rect x="24" y="24" width="11" height="11" rx="3" fill="#ddd"/><rect x="38" y="24" width="11" height="11" rx="3" fill="#e86060"/><rect x="10" y="39" width="11" height="11" rx="3" fill="#8c4fd0"/><rect x="24" y="39" width="11" height="11" rx="3" fill="#55a8e8"/><rect x="38" y="39" width="11" height="11" rx="3" fill="#62d0a0"/></g></svg></div>
    <div class="ic"><svg viewBox="0 0 58 58"><defs><linearGradient id="ml" x1="0" y1="0" x2="0" y2="1"><stop offset="0" stop-color="#3a80ee"/><stop offset="1" stop-color="#5ec3fa"/></linearGradient></defs><rect width="58" height="58" rx="13" fill="url(#ml)"/><path d="M9 16h40v28H9z" fill="#f4f4f4"/><path d="M9 16l20 16 20-16M9 44l14-16M49 44L35 28" fill="none" stroke="#bbb"/></svg></div>
    <div class="ic"><svg viewBox="0 0 58 58"><rect width="58" height="58" rx="13" fill="#ad8650"/><circle cx="29" cy="29" r="22" fill="none" stroke="#8d6a3c" stroke-width="2"/><ellipse cx="29" cy="23" rx="8" ry="10" fill="#8d6a3c"/><path d="M13 46c2-10 9-13 16-13s14 3 16 13" fill="none" stroke="#8d6a3c" stroke-width="2"/></svg></div>
    <div class="ic"><svg viewBox="0 0 58 58"><rect width="58" height="58" rx="13" fill="#f4f4f4"/><path d="M0 18V13A13 13 0 0 1 13 0h32a13 13 0 0 1 13 13v5z" fill="#df5a4c"/><text x="29" y="14" class="cal-m">MAR</text><text x="29" y="50" class="cal-d">23</text></svg></div>
    <div class="ic"><svg viewBox="0 0 58 58"><rect width="58" height="58" rx="13" fill="#f3f1eb"/><path d="M0 16V13A13 13 0 0 1 13 0h32a13 13 0 0 1 13 13v3z" fill="#f5cf4c"/><path d="M0 16h58" stroke="#aaa" stroke-dasharray="1 1"/><path d="M0 28h58M0 43h58" stroke="#ddd"/></svg></div>
    <div class="ic"><svg viewBox="0 0 58 58"><rect width="58" height="58" rx="13" fill="#fff"/><g fill="#fff" stroke-width="3"><circle cx="12" cy="14" r="4" stroke="#3a78e0"/><circle cx="12" cy="29" r="4" stroke="#d8402e"/><circle cx="12" cy="44" r="4" stroke="#e8903a"/></g><path d="M22 14h26M22 29h26M22 44h26" stroke="#888"/></svg></div>
    <div class="ic"><svg viewBox="0 0 58 58"><rect width="58" height="58" rx="13" fill="#86d676"/><path d="M0 46V13A13 13 0 0 1 3 5l12 53A13 13 0 0 1 0 46z" fill="#e07cc0"/><path d="M38 0h20v20C48 18 40 10 38 0z" fill="#e4e4e4"/><path d="M42 58h3a13 13 0 0 0 13-13v-7z" fill="#f2c830"/><path d="M22 0h10v58H22z" fill="#3a7fe0"/><circle cx="27" cy="36" r="12" fill="#3a7fe0" stroke="#fff" stroke-width="3"/><path d="M27 28l6 14-6-3-6 3z" fill="#fff"/></svg></div>
    <div class="ic"><svg viewBox="0 0 58 58"><rect width="58" height="58" rx="13" fill="#fff"/><g opacity=".75"><ellipse cx="29" cy="14" rx="7" ry="12" fill="#f0a030"/><ellipse cx="41" cy="19" rx="7" ry="12" transform="rotate(45 41 19)" fill="#e8d040"/><ellipse cx="45" cy="29" rx="12" ry="7" fill="#8ac850"/><ellipse cx="41" cy="40" rx="7" ry="12" transform="rotate(-45 41 40)" fill="#60b0c0"/><ellipse cx="29" cy="44" rx="7" ry="12" fill="#5070d0"/><ellipse cx="17" cy="40" rx="7" ry="12" transform="rotate(45 17 40)" fill="#9060d0"/><ellipse cx="13" cy="29" rx="12" ry="7" fill="#d060a0"/><ellipse cx="17" cy="19" rx="7" ry="12" transform="rotate(-45 17 19)" fill="#e05040"/></g></svg></div>
    <div class="ic"><svg viewBox="0 0 58 58"><rect width="58" height="58" rx="13" fill="#6fd25f"/><rect x="9" y="17" width="28" height="24" rx="6" fill="#f4f4f4"/><path d="M40 26l10-8v22l-10-8z" fill="#f4f4f4"/></svg></div>
    <div class="ic"><svg viewBox="0 0 58 58"><rect width="58" height="58" rx="13" fill="#fff"/><path d="M14 8h30v22H14z" fill="#2f7fe8"/><rect x="19" y="12" width="20" height="14" fill="#fff"/><circle cx="29" cy="19" r="5" fill="#e8a030"/><path d="M29 30v20M20 52h18" stroke="#888" stroke-width="2"/></svg></div>
    <div class="ic"><svg viewBox="0 0 58 58"><rect width="58" height="58" rx="13" fill="#fff"/><path d="M0 12h58M0 24h58M0 36h58M0 48h58M12 0v58M24 0v58M36 0v58M48 0v58" stroke="#d8ecd8"/><rect x="11" y="28" width="9" height="22" fill="#d8402e"/><rect x="24" y="18" width="9" height="32" fill="#e8903a"/><rect x="36" y="8" width="9" height="42" fill="#4fb050"/><rect x="45" y="15" width="8" height="35" fill="#3a80e0"/></svg></div>
    <div class="ic"><svg viewBox="0 0 58 58"><rect width="58" height="58" rx="13" fill="#fff"/><path d="M8 12c-1 3-1 6 2 8M16 12c-1 3-1 6 2 8" fill="none" stroke="#e8a030" stroke-width="3"/><path d="M44 4l-12 36-3 12-2-2 4-12z" fill="#e8a030"/><path d="M32 40l-3 12-2-2z" fill="#333"/></svg></div>
    <div class="ic"><svg viewBox="0 0 58 58"><rect width="58" height="58" rx="13" fill="#e14c56"/><path d="M22 40V16l22-5v26" fill="none" stroke="#fff" stroke-width="4"/><ellipse cx="16" cy="42" rx="7" ry="6" fill="#fff"/><ellipse cx="38" cy="38" rx="7" ry="6" fill="#fff"/></svg></div>
    <div class="ic"><svg viewBox="0 0 58 58"><rect width="58" height="58" rx="13" fill="#3f90ea"/><path d="M29 10L14 46M29 10l15 36M8 36h42" stroke="#fff" stroke-width="4" fill="none"/></svg></div>
    <div class="ic"><svg viewBox="0 0 58 58"><rect width="58" height="58" rx="13" fill="#fff"/><circle cx="29" cy="29" r="26" fill="#2858c8"/><circle cx="29" cy="29" r="20" fill="#fff"/><path d="M17 38c-3-10 1-20 5-21l7 11 7-11c4 1 8 11 5 21l-4 4V28l-8 12-8-12v14z" fill="#2858c8"/></svg></div>
    <div class="ic"><svg viewBox="0 0 58 58"><rect width="58" height="58" rx="13" fill="#16251f"/><use href="#apl" fill="#eee" transform="translate(7 20) scale(.62)"/><text x="39" y="38" class="tv">tv</text></svg></div>
    <div class="ic zoom"><svg viewBox="0 0 64 64"><rect width="64" height="64" rx="18" fill="#4088f8"/><rect x="10" y="21" width="30" height="22" rx="5" fill="#fff"/><path d="M43 30l11-8v20l-11-8z" fill="#fff"/></svg></div>
    <div class="ic">
      <svg viewBox="0 0 58 58"><rect width="58" height="58" rx="13" fill="#fff"/><rect x="18" y="8" width="33" height="42" rx="2" fill="#33a060"/><path d="M33 8h18v14H33z" fill="#66c688"/><path d="M33 22h18v14H33z" fill="#4cb070"/><rect x="7" y="18" width="24" height="24" rx="2" fill="#1d6a3a"/><text x="19" y="36" class="ms">X</text></svg>
      <i class="run"></i>
    </div>
    <div class="ic"><svg viewBox="0 0 58 58"><rect width="58" height="58" rx="13" fill="#fff"/><circle cx="32" cy="29" r="22" fill="#e87a4a"/><path d="M32 29V7a22 22 0 0 1 22 22z" fill="#f0a080"/><rect x="7" y="18" width="24" height="24" rx="2" fill="#b83e1e"/><text x="19" y="36" class="ms">P</text></svg></div>
    <div class="ic"><svg viewBox="0 0 58 58"><rect width="58" height="58" rx="13" fill="#74e06c"/><ellipse cx="29" cy="28" rx="20" ry="20" fill="#f2f4f0"/><path d="M20 44l-4 8 12-4z" fill="#f2f4f0"/></svg></div>
    <div class="ic">
      <svg viewBox="0 0 58 58"><rect width="58" height="58" rx="13" fill="#a5a8a8"/><circle cx="29" cy="29" r="24" fill="#5a5d60"/><circle cx="29" cy="29" r="15" fill="none" stroke="#cfd1d2" stroke-width="4"/><path d="M29 29V14M29 29l13 8M29 29l-13 8" stroke="#cfd1d2" stroke-width="3"/></svg>
      <span class="badge">1</span>
    </div>
    <div class="ic">
      <svg viewBox="0 0 58 58"><rect width="58" height="58" rx="13" fill="#fff"/><rect x="18" y="8" width="33" height="42" rx="2" fill="#2b5eb8"/><path d="M18 8h33v14H18z" fill="#4a90e0"/><path d="M18 22h33v14H18z" fill="#3a75cf"/><rect x="7" y="18" width="24" height="24" rx="2" fill="#1d3f96"/><text x="19" y="36" class="ms">W</text></svg>
      <i class="run"></i>
    </div>
    <div class="ic">
      <svg viewBox="0 0 58 58"><rect width="58" height="58" rx="13" fill="#fff"/><path d="M8 20A25 25 0 0 1 52 20H29z" fill="#d9503f"/><path d="M8 20a25 25 0 0 0 18 33l11-19z" fill="#389a50"/><path d="M52 20H29l8 14-11 19A25 25 0 0 0 52 20z" fill="#f2c63a"/><circle cx="29" cy="29" r="11" fill="#fff"/><circle cx="29" cy="29" r="8.500" fill="#4488ee"/></svg>
      <i class="run"></i>
    </div>
    <div class="ic">
      <svg viewBox="0 0 58 58"><rect width="58" height="58" rx="13" fill="#e8e8ea"/><circle cx="29" cy="29" r="25" fill="#3f90ec"/><path d="M22 36l18-22-4 28z" fill="#f2f2f2"/><path d="M40 14L25 30l7 6z" fill="#d9402e"/></svg>
      <i class="run"></i>
    </div>
    <div class="ic tall"><svg viewBox="0 0 58 64"><ellipse cx="29" cy="32" rx="29" ry="32" fill="#fff"/><rect x="16" y="24" width="30" height="30" fill="#3f80e4"/><path d="M24 10a8 8 0 0 1 14 0v6H24z" fill="#7ac070"/><path d="M31 22L22 54M31 22l9 32" stroke="#111" stroke-width="3"/></svg></div>
    <div class="ic duck"><svg viewBox="0 0 58 70"><path d="M20 6c6-8 18-4 20 6 1 6-2 10-2 14 10 2 16 12 16 22 0 14-12 22-26 22S4 62 4 50c0-12 14-16 14-26 0-6-1-12 2-18z" fill="#f3c92f"/><path d="M36 14l14 8-8 14-8-8z" fill="#e8823a"/><circle cx="30" cy="12" r="2.500" fill="#333"/><path d="M14 46c6 8 22 10 30 2" fill="none" stroke="#d8a820" stroke-width="2"/></svg></div>
    <div class="ic"><svg viewBox="0 0 58 58"><rect x="1" y="1" width="56" height="56" rx="13" fill="#ccc"/><rect x="4" y="5" width="50" height="48" rx="9" fill="#111"/><rect x="8" y="9" width="42" height="40" rx="5" fill="#222"/><path d="M9 13l6 4-6 4" fill="none" stroke="#fff" stroke-width="2"/><path d="M17 23h6" stroke="#fff" stroke-width="2"/></svg></div>
    <div class="ic mysql"><svg viewBox="0 0 68 70"><defs><linearGradient id="sq" x1="0" y1="0" x2="0" y2="1"><stop offset="0" stop-color="#3a6c9a"/><stop offset="1" stop-color="#1c3f64"/></linearGradient></defs><rect width="68" height="70" rx="8" fill="url(#sq)"/><path d="M8 12c12-2 22 2 30 12s6 18 14 30M16 14c-2 8 6 12 10 16s4 16 14 28" fill="none" stroke="#fff" stroke-width="2"/><path d="M50 12l8-4-2 8 6 4-8 2z" fill="#fff"/></svg></div>
    <div class="ic"><svg viewBox="0 0 58 58"><rect width="58" height="58" rx="13" fill="#fff"/><path d="M40 6l12 6v34l-12 6-22-20-8 6-4-3V23l4-3 8 6z" fill="#2f7fd0"/><path d="M40 19L27 29l13 10z" fill="#fff"/></svg></div>
    <i class="dock-sep"></i>
    <div class="ic tall"><svg viewBox="0 0 58 64"><ellipse cx="29" cy="32" rx="28" ry="31" fill="#7f9094" stroke="#ddd" stroke-width="2"/><text x="29" y="38" class="tex-txt">T<tspan dy="4">E</tspan><tspan dy="-4">X</tspan></text></svg></div>
    <div class="ic"><svg viewBox="0 0 58 58"><rect width="58" height="58" rx="13" fill="#f0f4fa"/><rect x="5" y="5" width="48" height="48" rx="6" fill="#8fb0e0"/><rect x="5" y="36" width="48" height="17" fill="#c8d4e0"/><rect x="30" y="26" width="20" height="30" rx="3" fill="#222"/><rect x="32" y="42" width="16" height="14" fill="#ddd"/></svg></div>
    <div class="ic"><svg viewBox="0 0 58 58"><rect width="58" height="58" rx="13" fill="#3a4046"/><circle cx="29" cy="27" r="20" fill="#c8d8e8"/><circle cx="29" cy="27" r="13" fill="#3aa8f0"/><circle cx="29" cy="27" r="7" fill="#9ad8ff"/><path d="M34 40l10 14" stroke="#c8d8e8" stroke-width="5"/></svg></div>
    <i class="dock-sep"></i>
    <div class="ic trash"><svg viewBox="0 0 58 66"><path d="M6 10l6 52c2 3 32 3 34 0l6-52z" fill="#7a7d80"/><path d="M14 12l6 48M29 12v48" stroke="#999" stroke-width="3"/><path d="M6 10l8-8 6 6 8-8 8 8 6-6 10 8z" fill="#d8d8d8"/></svg></div>
  </footer>
</body>
</html>
```

FILE: styles.css
```css
* {
  box-sizing: border-box;
}

html,
body {
  margin: 0;
  height: 100%;
}

body {
  width: 2880px;
  height: 1800px;
  overflow: hidden;
  display: flex;
  flex-direction: column;
  font-family: Inter, 'Liberation Sans', sans-serif;
  color: #fff;
  background: linear-gradient(90deg, #a9a9a9 0, #8a8a8a 1100px, #22384e 1250px, #22384e 1770px, #b0aca6 1790px, #b8b4ae 2880px);
}

i {
  font-style: normal;
}

.defs {
  position: absolute;
}

/* mac menu bar */
.menubar {
  height: 48px;
  flex: none;
  display: flex;
  align-items: center;
  background: #2c2c2c;
  padding: 0 0 2px 40px;
  font-size: 25.500px;
}

.apple {
  width: 26px;
  height: 32px;
  margin-right: 41px;
}

.menu {
  display: flex;
  gap: 41.500px;
}

.menu .app {
  font-weight: 700;
}

.status {
  margin-left: auto;
  display: grid;
  grid-template-columns: 64px 106px 78px 64px 68px 66px 80px 60px 90px 58px 72px 50px;
  justify-items: center;
  align-items: center;
}

.off,
.ctl {
  display: flex;
  align-items: center;
  gap: 4px;
}

.off span {
  font-size: 22px;
}

.ctl i {
  width: 10px;
  height: 10px;
  border-radius: 50%;
  background: #d99a4a;
}

.siri {
  width: 30px;
  height: 34px;
  border-radius: 50%;
  background: radial-gradient(circle, #f4f 0, #3070c0 45%, #2a6a60 75%, #333 100%);
}

.clock {
  margin-left: 23px;
  margin-right: 37px;
  white-space: nowrap;
}

/* browser window */
.window {
  height: 1644px;
  width: 2878px;
  flex: none;
  margin-top: 2px;
  display: flex;
  flex-direction: column;
  background: #262626;
  border: 2px solid #d6d0cc;
  border-bottom: 4px solid #bdbdbd;
  border-radius: 22px;
  overflow: hidden;
  box-shadow: 0 -2px 0 #111;
}

.tabstrip {
  height: 82px;
  flex: none;
  display: flex;
  align-items: flex-end;
  background: #5b1a35;
  padding-left: 30px;
  position: relative;
}

.lights {
  width: 157px;
  height: 68px;
  display: flex;
  gap: 16px;
  padding: 22px 10px;
  flex: none;
}

.lights i {
  width: 24px;
  height: 24px;
  border-radius: 50%;
}

.lights .red { background: #ee6a5c; }
.lights .yellow { background: #e2c040; }
.lights .green { background: #6cc04a; }

.tab {
  width: 478px;
  height: 68px;
  flex: none;
  display: flex;
  align-items: center;
  padding-left: 22px;
  position: relative;
  font-size: 24px;
  white-space: nowrap;
}

.tab::after {
  content: '';
  position: absolute;
  right: 0;
  top: 14px;
  height: 40px;
  width: 2px;
  background: #8a5a70;
}

.tab.no-sep::after {
  display: none;
}

.fav {
  width: 32px;
  height: 32px;
  flex: none;
  margin-right: 17px;
}

.tab-title {
  width: 346px;
  flex: none;
}

.tab-title.fade {
  -webkit-mask-image: linear-gradient(90deg, #000 92%, transparent 100%);
  mask-image: linear-gradient(90deg, #000 92%, transparent 100%);
}

.tab-title.rec {
  width: 300px;
}

.tab-x {
  font-size: 20px;
  font-weight: 700;
  margin-left: 20px;
}

.rec-dot {
  width: 24px;
  height: 24px;
  margin-left: 20px;
  flex: none;
}

.rec-dot + .tab-x {
  margin-left: 22px;
}

.tab.active {
  width: 480px;
  background: #91264f;
  border-radius: 16px 16px 0 0;
}

.tab.active::before,
.tab.active::after {
  content: '';
  display: block;
  position: absolute;
  top: auto;
  bottom: 0;
  width: 16px;
  height: 16px;
}

.tab.active::before {
  left: -16px;
  background: radial-gradient(circle at 0 0, transparent 15.500px, #91264f 16px);
}

.tab.active::after {
  right: -16px;
  background: radial-gradient(circle at 100% 0, transparent 15.500px, #91264f 16px);
}

.newtab {
  width: 88px;
  height: 68px;
  text-align: center;
  font-size: 44px;
  font-weight: 300;
  line-height: 66px;
}

.tab-menu {
  position: absolute;
  right: 34px;
  top: 42px;
}

.toolbar {
  height: 70px;
  flex: none;
  display: flex;
  align-items: center;
  background: #91264f;
  padding-left: 27px;
}

.tb-ic {
  width: 32px;
  height: 32px;
  margin-right: 32px;
  flex: none;
}

.omnibox {
  width: 2326px;
  height: 56px;
  margin-left: -3px;
  flex: none;
  display: flex;
  align-items: center;
  background: #71213f;
  border: 2px solid #5b1a35;
  border-radius: 28px;
  padding-left: 28px;
  padding-right: 20px;
}

.lock {
  width: 18px;
  height: 26px;
  margin-right: 18px;
}

.url {
  font-size: 28px;
  color: #cda8b8;
  flex: 1;
}

.url b {
  font-weight: 400;
  color: #fff;
}

.omni-ic {
  width: 28px;
  height: 34px;
  margin-left: 36px;
}

.puzzle {
  width: 32px;
  height: 32px;
  margin-left: 27px;
}

.profile {
  width: 44px;
  height: 44px;
  margin-left: 26px;
  border-radius: 50%;
  background: #6f9a45;
  text-align: center;
  line-height: 44px;
  font-size: 22px;
}

.update {
  width: 174px;
  height: 56px;
  margin-left: 15px;
  display: flex;
  align-items: center;
  padding-left: 24px;
  font-size: 26px;
  color: #e28c7f;
  background: #4d2a3a;
  border: 3px solid #e28c7f;
  border-radius: 28px;
  position: relative;
}

.update i {
  position: absolute;
  right: 24px;
  top: 11px;
  width: 5px;
  height: 5px;
  border-radius: 50%;
  background: #e28c7f;
  box-shadow: 0 11px 0 #e28c7f, 0 22px 0 #e28c7f;
}

.bookmarks {
  height: 68px;
  flex: none;
  display: flex;
  align-items: center;
  gap: 31px;
  background: #91264f;
  border-bottom: 2px solid #b4566f;
  padding: 0 0 6px 28px;
  font-size: 24px;
}

.bm,
.bm-more {
  display: flex;
  align-items: center;
  gap: 16px;
  white-space: nowrap;
}

.bm-ic {
  width: 32px;
  height: 32px;
  flex: none;
}

.fav-txt {
  font: 700 24px Inter, sans-serif;
  fill: #fff;
  text-anchor: middle;
}

.bm-more {
  margin-left: auto;
  padding-right: 25px;
}

.chev {
  font-size: 26px;
  margin-right: 8px;
}

.bm-sep {
  width: 1px;
  height: 44px;
  background: #c98aa0;
  margin-right: 2px;
}

/* collaborate session */
.collab {
  flex: 1;
  min-height: 0;
  display: flex;
  flex-direction: column;
  position: relative;
  background: #262626;
}

.session-head {
  display: flex;
  align-items: center;
  margin-top: 19px;
  height: 84px;
  gap: 24px;
  font-family: 'Open Sans', sans-serif;
  font-size: 28px;
}

.session-head span {
  margin-top: 2px;
}

.hamburger {
  width: 103px;
  height: 84px;
  background: #000;
  border: 2px solid #cfcfcf;
  border-left: none;
  border-radius: 0 42px 42px 0;
  display: flex;
  flex-direction: column;
  align-items: flex-start;
  justify-content: center;
  gap: 10px;
  padding-left: 38px;
}

.hamburger i {
  width: 48px;
  height: 2px;
  background: #fff;
}

.stage {
  display: flex;
  margin-top: 22px;
}

.side {
  width: 394px;
  flex: none;
}

.round {
  width: 86px;
  height: 86px;
  margin: 3px 0 0 18px;
  border-radius: 50%;
  background: #0e0e0e;
  display: flex;
  align-items: center;
  justify-content: center;
  padding: 2px 0 0 5px;
}

/* shared excel window */
.excel {
  width: 2085px;
  height: 1170px;
  flex: none;
  display: flex;
  flex-direction: column;
  position: relative;
  background: #e8e8e8;
  color: #444;
  font-family: 'Open Sans', sans-serif;
  font-size: 18px;
  filter: blur(.5px);
  overflow: hidden;
}

.xl-title {
  height: 56px;
  flex: none;
  display: flex;
  align-items: center;
  background: linear-gradient(90deg, #3c7a4b, #24683b);
  color: #fff;
  position: relative;
}

.qat {
  display: flex;
  align-items: center;
  gap: 10px;
  padding-left: 33px;
}

.qat .tiny {
  width: 7px;
  height: 7px;
  border-right: 2px solid #cfe0d4;
  border-bottom: 2px solid #cfe0d4;
  transform: rotate(45deg) translate(-2px, -2px);
}

.q-undo {
  margin-left: 13px;
}

.q-redo {
  margin-left: 10px;
}

.q-touch {
  margin-left: 21px;
}

.qat .q-drop {
  margin-left: 5px;
}

.qat .tiny.dash {
  margin-left: 20px;
}

.xl-doc {
  position: absolute;
  left: 853px;
  font-size: 17.500px;
  white-space: nowrap;
}

.xl-user {
  margin-left: auto;
  display: flex;
  align-items: center;
  font-size: 17.500px;
  padding-right: 28px;
}

.u-pic {
  margin-left: 17px;
}

.win-ic {
  margin-left: 54px;
}

.win-ic.w-disp {
  margin-left: 48px;
}

.win-ic.w-rest {
  margin-left: 55px;
}

.win-ic.w-close {
  margin-left: 56px;
}

.xl-tabs {
  height: 48px;
  flex: none;
  display: flex;
  align-items: center;
  gap: 42px;
  padding-left: 32px;
  background: linear-gradient(90deg, #3c7a4b, #24683b);
  color: #fff;
  font-size: 18.300px;
  white-space: nowrap;
}

.xl-tabs .on {
  height: 48px;
  width: 120px;
  margin: 0 -20px 0 -22px;
  background: #f3f3f3;
  color: #3c7a4b;
  text-align: center;
  line-height: 46px;
}

.xl-tabs .t-file {
  margin-right: 15px;
}

.bulb {
  margin-left: 2px;
  margin-right: -23px;
}

.xl-tabs .share {
  margin-left: auto;
  margin-right: 32px;
  display: flex;
  align-items: center;
  gap: 10px;
}

.ribbon {
  height: 148px;
  flex: none;
  display: flex;
  position: relative;
  background: #f3f3f3;
  border-bottom: 2px solid #ddd;
}

.group {
  display: flex;
  flex-direction: column;
  border-right: 1px solid #cfcfcf;
}

.group.lib { width: 879px; }
.group.names { width: 339px; }
.group.audit { width: 521px; }
.group.calc { width: 302px; }

.group-body {
  height: 122px;
  display: flex;
}

.group-label {
  height: 24px;
  text-align: center;
  font-size: 15.500px;
  line-height: 26px;
  color: #555;
}

.big {
  display: flex;
  flex-direction: column;
  align-items: center;
  padding-top: 12px;
  text-align: center;
  line-height: 27px;
  letter-spacing: -.2px;
  white-space: nowrap;
  flex: none;
}

.big > svg,
.big > .fx-big,
.big > .sigma {
  height: 45px;
  margin-bottom: 8px;
  flex: none;
}

.lib .big:nth-child(1) { width: 101px; margin-right: 8px; padding-left: 3px; border-right: 1px solid #d0d0d0; height: 112px; }
.lib .big:nth-child(2) { width: 86px; }
.lib .big:nth-child(3) { width: 86px; }
.lib .big:nth-child(4) { width: 78px; }
.lib .big:nth-child(5) { width: 74px; }
.lib .big:nth-child(6) { width: 66px; }
.lib .big:nth-child(7) { width: 72px; }
.lib .big:nth-child(8) { width: 108px; }
.lib .big:nth-child(9) { width: 80px; }
.lib .big:nth-child(10) { width: 106px; }

.fx-big {
  font: italic 48px/45px 'Liberation Serif', serif;
  color: #444;
}

.sigma {
  font: 56px/45px 'Liberation Serif', serif;
  color: #444;
}

.book {
  width: 38px;
}

.book.blue { color: #2e6fb6; }
.book.sage { color: #6a9e8a; }
.book.purple { color: #7d4fc0; }
.book.gold { color: #ecc05f; }
.book.rust { color: #d0542e; }
.book.orange { color: #e08033; }

.bk-txt {
  font: 22px 'Open Sans', sans-serif;
  fill: #fff;
  text-anchor: middle;
}

.dd {
  display: inline-block;
  width: 6px;
  height: 6px;
  border-right: 1.500px solid #666;
  border-bottom: 1.500px solid #666;
  transform: rotate(45deg);
  margin-left: 4px;
  vertical-align: 3px;
}

.dd.only {
  margin-left: 0;
  vertical-align: 6px;
}

.name-mgr {
  width: 110px;
  margin-right: -7px;
  padding-top: 15px;
}

.big.name-mgr > svg {
  margin-bottom: 5px;
}

.list {
  display: flex;
  flex-direction: column;
  padding-top: 6px;
}

.item {
  height: 38.500px;
  flex: none;
  display: flex;
  align-items: center;
  gap: 5px;
  white-space: nowrap;
  letter-spacing: -.2px;
}

.item .dd {
  margin-left: 10px;
}

.item.off {
  color: #b5b5b5;
}

.sm {
  width: 24px;
  height: 24px;
  flex: none;
}

.audit .list:first-child {
  width: 228px;
  padding-left: 20px;
}

.audit .list:nth-child(2) {
  width: 198px;
}

.watch {
  width: 88px;
}

.calc-opt {
  width: 118px;
  margin-left: 4px;
}

.calc-list {
  padding-top: 14px;
}

.calc-list .item {
  height: 50px;
}

.collapse {
  position: absolute;
  right: 14px;
  bottom: 5px;
}

.band {
  height: 20px;
  flex: none;
  background: #e6e6e6;
}

.band.thin {
  height: 21px;
  background: #e8e8e8;
}

.formula {
  height: 98px;
  flex: none;
  display: flex;
  align-items: flex-start;
  background: #e8e8e8;
  padding-left: 8px;
}

.name-box {
  width: 163px;
  height: 35px;
  background: #fafafa;
  padding-left: 8px;
  line-height: 35px;
  font-family: Lato, sans-serif;
  font-size: 20px;
  position: relative;
}

.mini-down {
  position: absolute;
  right: 10px;
  top: 15px;
  border: 4px solid transparent;
  border-top-color: #555;
}

.grip {
  width: 51px;
  height: 30px;
  margin-top: 3px;
  background: repeating-linear-gradient(180deg, #b0b0b0 0 3px, transparent 3px 8px) center / 3px 100% no-repeat;
}

.fx-box {
  width: 177px;
  height: 35px;
  display: flex;
  align-items: center;
  justify-content: space-between;
  background: #fafafa;
  padding: 0 18px;
}

.fx-box em {
  font: italic 24px 'Liberation Serif', serif;
  color: #666;
}

.input {
  width: 1670px;
  height: 98px;
  margin-left: 7px;
  background: #fdfdfd;
  text-align: right;
  padding: 8px 8px 0 0;
}

.sheet {
  height: 708px;
  flex: none;
  display: flex;
  overflow: hidden;
  background: #fff;
}

.grid {
  table-layout: fixed;
  border-collapse: separate;
  border-spacing: 0;
  width: 2053px;
  flex: none;
  font-family: Lato, sans-serif;
  font-size: 23px;
  color: #222;
  height: 0;
}

.c-h { width: 47px; }
.c-a { width: 141px; }
.c-b { width: 126px; }
.c-c { width: 336px; }
.c-d { width: 140px; }
.c-e { width: 138px; }
.c-f { width: 147px; }
.c-g { width: 139px; }
.c-m { width: 136px; }

.grid thead tr {
  height: 29px;
}

.grid tbody tr {
  height: 34px;
}

.grid th {
  background: #e6e6e6;
  font-weight: 400;
  color: #444;
  padding: 0;
  border-right: 1px solid #c8c8c8;
  border-bottom: 1px solid #c8c8c8;
  line-height: 1;
}

.grid td {
  padding: 0 4px;
  border-right: 1px solid #e4e4e4;
  border-bottom: 1px solid #e4e4e4;
  position: relative;
  white-space: nowrap;
  overflow: hidden;
  line-height: 1;
}

.grid td:first-of-type {
  border-right-color: transparent;
}

.grid thead th {
  border-bottom: 2px solid #b4b4b4;
}

.grid th.sel {
  background: #c8c8c8;
  color: #1f6a3b;
}

.grid tbody th.sel {
  border-right: 3px solid #1f6a3b;
}

.grid thead th.sel {
  border-bottom: 3px solid #1f6a3b;
}

.corner i {
  display: block;
  width: 0;
  height: 0;
  margin: 6px 0 0 12px;
  border-left: 26px solid transparent;
  border-bottom: 24px solid #b0b0b0;
}

.n {
  text-align: right;
}

.grid td.x {
  border-bottom: 3px solid #333;
}

.grid td.h {
  font: italic 26px 'Liberation Serif', serif;
  text-align: center;
}

.grid td.lab {
  font: 26px 'Liberation Serif', serif;
  border-right: 2px solid #222;
  padding-left: 5px;
}

.grid td.s {
  font: 26px 'Liberation Serif', serif;
  text-align: center;
  padding: 0;
  border-right: 2px solid #222;
  border-bottom: 2px solid #222;
}

.grid td.x.s,
.grid td.x.lab {
  border-bottom: 3px solid #333;
}

.flag::before {
  content: '';
  position: absolute;
  left: 0;
  top: 0;
  border-top: 14px solid #1f7a2a;
  border-right: 8px solid transparent;
}

.grid td.fl {
  font-size: 24.500px;
}

.filter {
  position: absolute;
  right: 1px;
  top: 3px;
  width: 26px;
  height: 26px;
  background: #efefef;
  border: 1px solid #b0b0b0;
}

.filter::after {
  content: '';
  position: absolute;
  left: 8px;
  top: 10px;
  border: 4px solid transparent;
  border-top-color: #555;
}

.filter.sorted::before {
  content: '';
  position: absolute;
  right: 4px;
  top: 6px;
  width: 2px;
  height: 12px;
  background: #555;
}

.grid td.active {
  overflow: visible;
}

.active .cursor-box {
  position: absolute;
  left: 0;
  top: 0;
  right: 0;
  bottom: 0;
  border: 3px solid #2c6e49;
}

.active .cursor-box::after {
  content: '';
  position: absolute;
  right: -5px;
  bottom: -5px;
  width: 7px;
  height: 7px;
  background: #2c6e49;
}

.grid td.has-cur {
  overflow: visible;
}

.plus-cur {
  position: absolute;
  left: 35px;
  top: -6px;
}

.vscroll {
  width: 32px;
  flex: none;
  display: flex;
  flex-direction: column;
  background: #e8e8e8;
  padding: 0 2px;
}

.sb-btn {
  height: 24px;
  background: #fbfbfb;
  border: 1px solid #888;
  display: flex;
  align-items: center;
  justify-content: center;
  flex: none;
}

.sb-btn i {
  border: 6px solid transparent;
}

.sb-btn .up {
  border-bottom-color: #555;
  margin-top: -6px;
}

.sb-btn .down {
  border-top-color: #555;
  margin-top: 6px;
}

.sb-thumb {
  height: 126px;
  background: #fdfdfd;
  border: 1px solid #aaa;
  flex: none;
}

.sb-track {
  flex: 1;
}

.sheet-tabs {
  height: 37px;
  flex: none;
  display: flex;
  align-items: stretch;
  background: #e6e6e6;
  position: relative;
}

.sheet-nav {
  width: 129px;
  display: flex;
  align-items: center;
  gap: 32px;
  padding-left: 35px;
}

.sheet-nav i {
  width: 2px;
  height: 14px;
  background: #c8c8c8;
}

.sheet-tab {
  width: 300px;
  background: #fff;
  border-bottom: 3px solid #1f6a3b;
  color: #1f6a3b;
  font-family: Lato, sans-serif;
  font-weight: 700;
  font-size: 22px;
  text-align: center;
  line-height: 34px;
}

.add-sheet {
  align-self: center;
  margin-left: 41px;
}

.hscroll {
  width: 1190px;
  height: 26px;
  margin-left: auto;
  align-self: center;
  background: #fdfdfd;
  border: 1px solid #999;
}

.hs-btn {
  width: 26px;
  height: 26px;
  align-self: center;
  margin: 0 31px 0 80px;
  background: #fdfdfd;
  border: 1px solid #999;
  position: relative;
}

.hs-btn::after {
  content: '';
  position: absolute;
  left: 9px;
  top: 6px;
  border: 6px solid transparent;
  border-left-color: #444;
}

.xl-status {
  height: 34px;
  flex: none;
  display: flex;
  align-items: center;
  padding-left: 12px;
  background: #f1f1f1;
  font-size: 16.500px;
  color: #555;
  border-bottom: 1px solid #cfcfcf;
}

.st-sheet {
  margin-left: 29px;
}

.st-acc {
  margin-left: 31px;
}

.acc {
  margin-left: 4px;
}

.views {
  display: flex;
  margin-left: auto;
  height: 34px;
}

.view {
  width: 62px;
  display: flex;
  align-items: center;
  justify-content: center;
}

.view + .view {
  width: 68px;
}

.view.on {
  background: #d4d4d4;
}

.zoomer {
  display: flex;
  align-items: center;
  gap: 8px;
  margin-left: 13px;
  font-size: 20px;
}

.slider {
  width: 160px;
  height: 2px;
  background: #555;
  position: relative;
}

.slider i {
  position: absolute;
  left: 78px;
  top: -9px;
  width: 5px;
  height: 20px;
  background: #555;
}

.pct {
  margin: 0 11px 0 25px;
}

.share-bar {
  position: absolute;
  left: 726px;
  top: 1089px;
  width: 636px;
  height: 70px;
  display: flex;
  align-items: center;
  background: #fdfdfd;
  box-shadow: 0 2px 4px rgba(0, 0, 0, .35);
  font-family: 'Open Sans', sans-serif;
  font-size: 18.500px;
  color: #555;
}

.grip-v {
  width: 7px;
  height: 20px;
  margin-left: 18px;
  border-left: 2px solid #bbb;
  border-right: 2px solid #bbb;
}

.share-msg {
  margin-left: 18px;
  width: 354px;
  white-space: nowrap;
}

.stop {
  width: 165px;
  height: 53px;
  background: #2b79d8;
  color: #fff;
  border-radius: 4px;
  text-align: center;
  line-height: 53px;
  font-size: 18px;
  font-weight: 600;
}

.hide {
  margin-left: 17px;
  color: #2b79d8;
}

/* bottom controls */
.controls {
  display: flex;
  gap: 20.600px;
  margin-top: 20px;
  padding-left: 1230px;
}

.ctrl {
  width: 86px;
  height: 86px;
  border-radius: 50%;
  background: #0e0e0e;
  display: flex;
  align-items: center;
  justify-content: center;
  position: relative;
}

.ok {
  position: absolute;
  right: -10px;
  bottom: -8px;
  width: 40px;
  height: 40px;
  border-radius: 50%;
  background: #5cc46e;
  border: 5px solid #0e0e0e;
  display: flex;
  align-items: center;
  justify-content: center;
}

.tile {
  position: absolute;
  left: 2552px;
  top: 1298px;
  width: 189px;
  height: 107px;
  background: #333;
  overflow: hidden;
}

.tile-av {
  position: absolute;
  left: 54px;
  top: 12px;
}

.tile-name {
  position: absolute;
  left: 0;
  right: 0;
  bottom: 0;
  height: 36px;
  background: rgba(30, 30, 30, .55);
  text-align: center;
  line-height: 36px;
  font-family: 'DejaVu Sans', sans-serif;
  font-size: 23.500px;
}

.drawer {
  position: absolute;
  left: 2773px;
  right: 0;
  top: 1316px;
  height: 86px;
  background: #b56fce;
  border-radius: 43px 0 0 43px;
  display: flex;
  align-items: center;
  padding-left: 30px;
}

/* dock */
.dock {
  width: 2762px;
  height: 95px;
  flex: none;
  margin: 3px 0 0 60px;
  display: flex;
  align-items: center;
  gap: 18.600px;
  padding: 0 0 9px 10px;
  background: #0e0e0e;
  border: 3px solid #bcbcbc;
  border-left-width: 2px;
  border-radius: 22px;
  box-shadow: 0 2px 2px #111;
}

.ic {
  width: 58px;
  height: 58px;
  flex: none;
  position: relative;
}

.ic svg {
  display: block;
  width: 100%;
}

.run {
  position: absolute;
  left: 26px;
  top: 66px;
  width: 6px;
  height: 8px;
  border-radius: 50%;
  background: #9a9a9a;
}

.zoom {
  height: 64px;
  width: 62px;
  margin: 0 -2px;
}

.tall {
  height: 64px;
}

.duck {
  height: 70px;
  margin-top: -4px;
}

.mysql {
  width: 68px;
  height: 70px;
  margin: 0 -5px;
}

.trash {
  height: 66px;
}

.cal-m {
  font: 600 12px Inter, sans-serif;
  fill: #fff;
  text-anchor: middle;
}

.cal-d {
  font: 400 34px Inter, sans-serif;
  fill: #222;
  text-anchor: middle;
}

.tv {
  font: 700 22px Inter, sans-serif;
  fill: #eee;
  text-anchor: middle;
}

.ms {
  font: 600 17px Inter, sans-serif;
  fill: #fff;
  text-anchor: middle;
}

.tex-txt {
  font: 700 20px 'Liberation Serif', serif;
  fill: #eee;
  text-anchor: middle;
}

.badge {
  position: absolute;
  right: -8px;
  top: -8px;
  width: 24px;
  height: 26px;
  border-radius: 50%;
  background: #d9402e;
  color: #fff;
  font-size: 16px;
  text-align: center;
  line-height: 26px;
}

.dock-sep {
  width: 1px;
  height: 70px;
  background: #555;
  flex: none;
  margin: 0 5px 0 10px;
}
```
